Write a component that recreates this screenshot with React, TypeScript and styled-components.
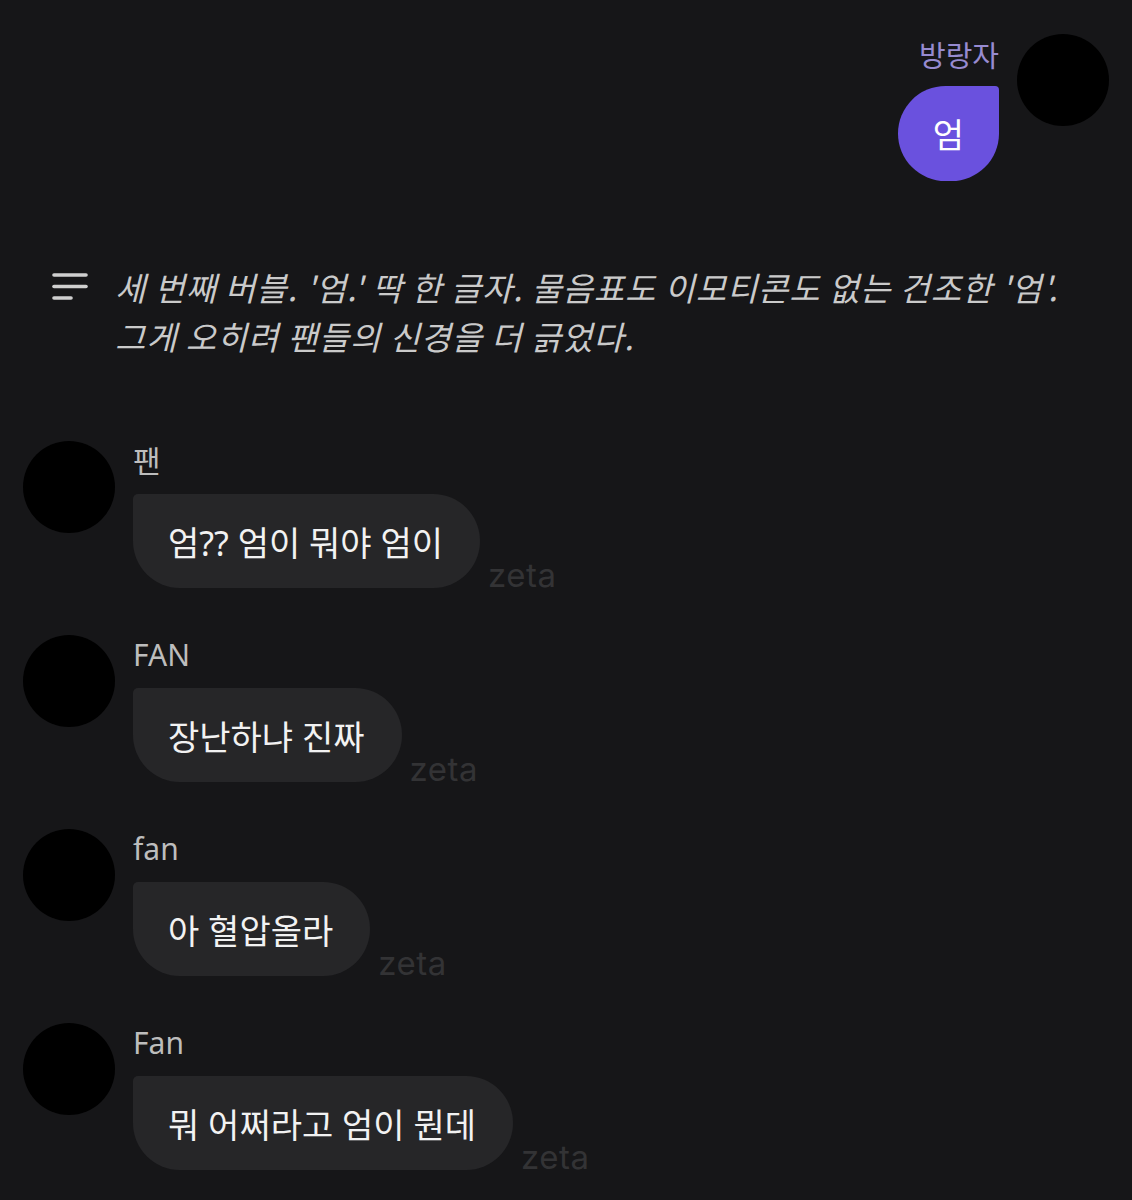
import React from "react";
import styled, { createGlobalStyle } from "styled-components";

const GlobalStyle = createGlobalStyle`
  html, body {
    margin: 0;
    padding: 0;
    background: #161618;
  }
  body {
    font-family: "Noto Sans", "Noto Sans CJK KR", sans-serif;
    color: #ececec;
  }
`;

const Page = styled.div`
  min-height: 1200px;
  background: #161618;
  padding: 34px 23px 0 23px;
  box-sizing: border-box;
  display: flex;
  flex-direction: column;
`;

const Avatar = styled.div`
  width: 92px;
  height: 92px;
  border-radius: 50%;
  background: #000;
  flex-shrink: 0;
`;

const UserRow = styled.div`
  display: flex;
  justify-content: flex-end;
  gap: 18px;
`;

const UserColumn = styled.div`
  display: flex;
  flex-direction: column;
  align-items: flex-end;
`;

const UserName = styled.div`
  font-family: "Noto Sans CJK KR", sans-serif;
  font-size: 29px;
  line-height: 40px;
  color: #978bd0;
`;

const UserBubble = styled.div`
  margin-top: 12px;
  height: 95px;
  min-width: 101px;
  box-sizing: border-box;
  padding: 0 34px;
  display: flex;
  align-items: center;
  justify-content: center;
  background: #6a51de;
  border-radius: 48px 4px 48px 48px;
  font-family: "Noto Sans CJK KR", sans-serif;
  font-size: 34px;
  color: #fff;
`;

const Narration = styled.div`
  margin-top: 82px;
  display: flex;
  align-items: flex-start;
  gap: 27px;
  padding-left: 29px;
`;

const NarrationIcon = styled.svg`
  flex-shrink: 0;
  width: 36px;
  height: 30px;
  margin-top: 9px;
`;

const NarrationText = styled.p`
  margin: 0;
  max-width: 990px;
  font-family: "Noto Sans CJK KR", sans-serif;
  font-style: italic;
  font-size: 33px;
  line-height: 49px;
  letter-spacing: 0.85px;
  word-break: keep-all;
  color: #cacaca;
`;

const FanList = styled.div`
  margin-top: 80px;
  display: flex;
  flex-direction: column;
  gap: 47px;
`;

const FanRow = styled.div`
  display: flex;
  align-items: flex-start;
  gap: 18px;
`;

const FanColumn = styled.div`
  display: flex;
  flex-direction: column;
  align-items: flex-start;
`;

const FanName = styled.div`
  font-family: "Noto Sans", "Noto Sans CJK KR", sans-serif;
  font-size: 30px;
  line-height: 40px;
  color: #bdbdbd;
`;

const BubbleLine = styled.div`
  margin-top: 13px;
  display: flex;
  align-items: flex-end;
  gap: 8px;
`;

const FanBubble = styled.div`
  height: 94px;
  box-sizing: border-box;
  padding: 0 37px 0 35px;
  display: flex;
  align-items: center;
  background: #262628;
  border-radius: 5px 47px 47px 47px;
  font-family: "Noto Sans", "Noto Sans CJK KR", sans-serif;
  font-size: 34px;
  color: #f2f2f2;
  white-space: nowrap;
`;

const Watermark = styled.span`
  font-family: "Inter", "Noto Sans", sans-serif;
  font-size: 33px;
  line-height: 1;
  letter-spacing: 0.5px;
  color: #333335;
  margin-bottom: -4px;
`;

const fans = [
  { name: "팬", text: "엄?? 엄이 뭐야 엄이" },
  { name: "FAN", text: "장난하냐 진짜" },
  { name: "fan", text: "아 혈압올라" },
  { name: "Fan", text: "뭐 어쩌라고 엄이 뭔데" },
];

export default function App() {
  return (
    <>
      <GlobalStyle />
      <Page>
        <UserRow>
          <UserColumn>
            <UserName>방랑자</UserName>
            <UserBubble>엄</UserBubble>
          </UserColumn>
          <Avatar />
        </UserRow>

        <Narration>
          <NarrationIcon viewBox="0 0 36 30" aria-hidden="true">
            <g stroke="#cfcfcf" strokeWidth="3.6" strokeLinecap="round">
              <line x1="2" y1="3" x2="34" y2="3" />
              <line x1="2" y1="14.5" x2="34" y2="14.5" />
              <line x1="2" y1="26" x2="19" y2="26" />
            </g>
          </NarrationIcon>
          <NarrationText>
            세 번째 버블. '엄.' 딱 한 글자. 물음표도 이모티콘도 없는 건조한 '엄'. 그게 오히려 팬들의 신경을 더 긁었다.
          </NarrationText>
        </Narration>

        <FanList>
          {fans.map((f) => (
            <FanRow key={f.name}>
              <Avatar />
              <FanColumn>
                <FanName>{f.name}</FanName>
                <BubbleLine>
                  <FanBubble>{f.text}</FanBubble>
                  <Watermark>zeta</Watermark>
                </BubbleLine>
              </FanColumn>
            </FanRow>
          ))}
        </FanList>
      </Page>
    </>
  );
}
